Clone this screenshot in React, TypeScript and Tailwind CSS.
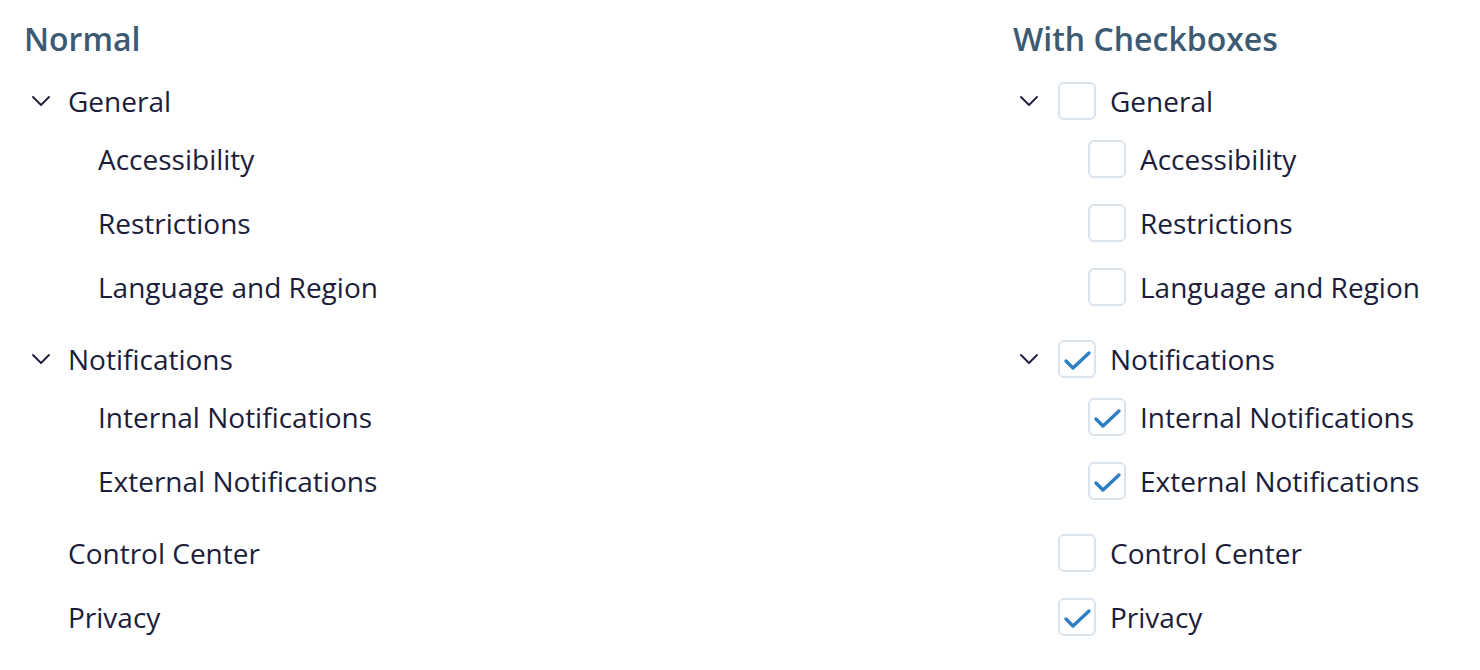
import React, { useState } from 'react';

// settings tree: plain version on the left, checkbox version on the right

interface Node {
  id: string;
  label: string;
  children?: Node[];
}

const tree: Node[] = [
  {
    id: 'general',
    label: 'General',
    children: [
      { id: 'accessibility', label: 'Accessibility' },
      { id: 'restrictions', label: 'Restrictions' },
      { id: 'language', label: 'Language and Region' },
    ],
  },
  {
    id: 'notifications',
    label: 'Notifications',
    children: [
      { id: 'internal', label: 'Internal Notifications' },
      { id: 'external', label: 'External Notifications' },
    ],
  },
  { id: 'control', label: 'Control Center' },
  { id: 'privacy', label: 'Privacy' },
];

const Chevron = () => (
  <svg width="18" height="10" viewBox="0 0 18 10" fill="none">
    <path d="M1 1L9 9L17 1" stroke="#1c1d3a" strokeWidth="1.8" strokeLinecap="round" strokeLinejoin="round" />
  </svg>
);

const Checkbox = ({ checked, onClick }: { checked: boolean; onClick: () => void }) => (
  <button
    onClick={onClick}
    className="w-[38px] h-[38px] shrink-0 rounded-[6px] border-2 border-[#dbe4ed] bg-white flex items-center justify-center"
  >
    {checked && (
      <svg width="38" height="38" viewBox="0 0 38 38" fill="none" className="-m-[2px]">
        <path d="M8 21L15 28L31 13" stroke="#2d7ec4" strokeWidth="3.4" strokeLinecap="round" strokeLinejoin="round" />
      </svg>
    )}
  </button>
);

const NormalTree = () => (
  <div>
    {tree.map((node) => (
      <div key={node.id}>
        <div className="h-[64px] flex items-center">
          <div className="w-[42px] shrink-0 pl-[6px] flex items-center">{node.children && <Chevron />}</div>
          <span>{node.label}</span>
        </div>
        {node.children && (
          <div className="-mt-[6px] mb-[8px]">
            {node.children.map((child) => (
              <div key={child.id} className="h-[64px] flex items-center pl-[72px]">
                {child.label}
              </div>
            ))}
          </div>
        )}
      </div>
    ))}
  </div>
);

const CheckboxTree = () => {
  const [checked, setChecked] = useState<Record<string, boolean>>({
    notifications: true,
    internal: true,
    external: true,
    privacy: true,
  });

  const toggle = (id: string) => setChecked((prev) => ({ ...prev, [id]: !prev[id] }));

  return (
    <div>
      {tree.map((node) => (
        <div key={node.id}>
          <div className="h-[64px] flex items-center">
            <div className="w-[44px] shrink-0 pl-[6px] flex items-center">{node.children && <Chevron />}</div>
            <Checkbox checked={!!checked[node.id]} onClick={() => toggle(node.id)} />
            <span className="ml-[14px]">{node.label}</span>
          </div>
          {node.children && (
            <div className="-mt-[6px] mb-[8px]">
              {node.children.map((child) => (
                <div key={child.id} className="h-[64px] flex items-center pl-[74px]">
                  <Checkbox checked={!!checked[child.id]} onClick={() => toggle(child.id)} />
                  <span className="ml-[14px]">{child.label}</span>
                </div>
              ))}
            </div>
          )}
        </div>
      ))}
    </div>
  );
};

export default function App() {
  return (
    <div className="w-[1480px] h-[670px] bg-white flex pl-[25px] pt-[19px] text-[28px] leading-[40px] text-[#1c1d3a] font-['Open_Sans',sans-serif]">
      <div className="w-[989px] shrink-0">
        <h2 className="h-[40px] leading-[40px] -ml-[1px] text-[32px] font-semibold text-[#3d5a73] mb-[10px]">Normal</h2>
        <div className="pl-[1px]">
          <NormalTree />
        </div>
      </div>
      <div>
        <h2 className="h-[40px] leading-[40px] -ml-[1px] text-[32px] font-semibold text-[#3d5a73] mb-[10px]">With Checkboxes</h2>
        <CheckboxTree />
      </div>
    </div>
  );
}
